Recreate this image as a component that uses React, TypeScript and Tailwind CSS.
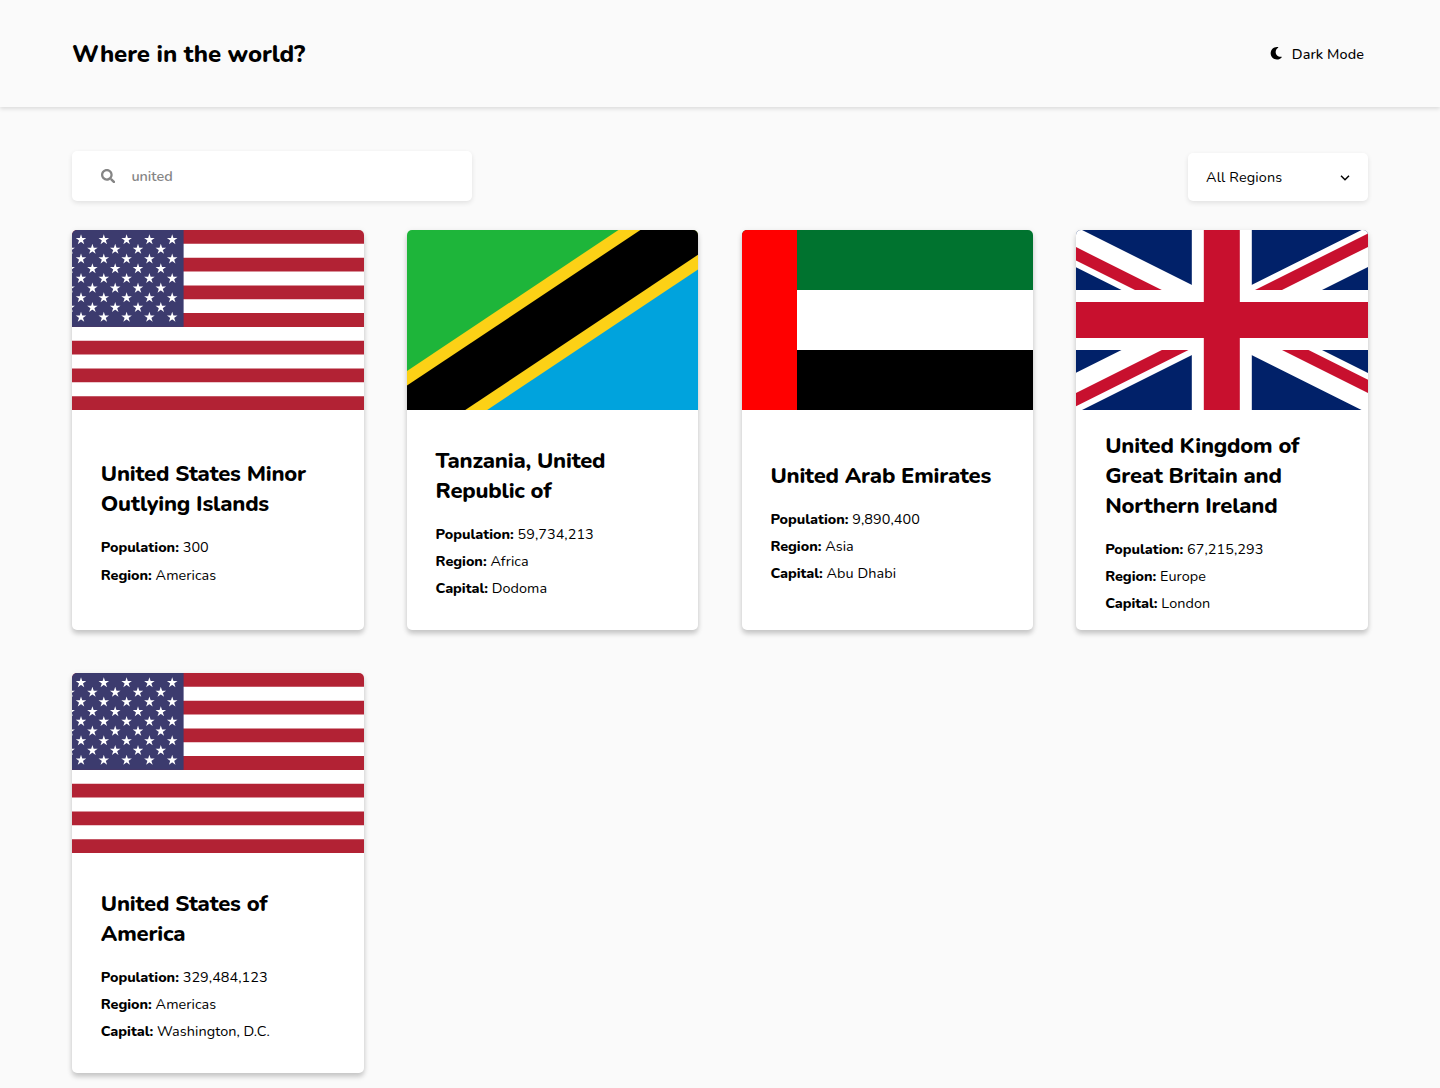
import React, { useState } from "react";
import { FaMoon, FaSearch } from "react-icons/fa";

const STAR = "M0,-120 70.5,97 -114.1,-37 114.1,-37 -70.5,97z";

function UsFlag() {
  const stars: [number, number][] = [];
  for (let row = 0; row < 9; row++) {
    const odd = row % 2 === 1;
    for (let i = 0; i < (odd ? 5 : 6); i++) {
      stars.push([(odd ? 494 : 247) + i * 494, 210 * (row + 1)]);
    }
  }
  return (
    <svg viewBox="0 0 7410 3900" preserveAspectRatio="xMidYMid slice" className="block h-full w-full">
      <rect width="7410" height="3900" fill="#b22234" />
      <path
        d="M0,450H7410m0,600H0m0,600H7410m0,600H0m0,600H7410m0,600H0"
        stroke="#fff"
        strokeWidth="300"
      />
      <rect width="2964" height="2100" fill="#3c3b6e" />
      {stars.map(([x, y]) => (
        <path key={`${x}-${y}`} d={STAR} transform={`translate(${x} ${y})`} fill="#fff" />
      ))}
    </svg>
  );
}

function TanzaniaFlag() {
  return (
    <svg viewBox="0 0 72 48" preserveAspectRatio="xMidYMid slice" className="block h-full w-full">
      <path d="M0,0H72L0,48z" fill="#1eb53a" />
      <path d="M72,0V48H0z" fill="#00a3dd" />
      <path d="M-12,56L84,-8" stroke="#fcd116" strokeWidth="19" />
      <path d="M-12,56L84,-8" stroke="#000" strokeWidth="13" />
    </svg>
  );
}

function UaeFlag() {
  return (
    <svg viewBox="0 0 12 6" preserveAspectRatio="xMidYMid slice" shapeRendering="crispEdges" className="block h-full w-full">
      <rect width="12" height="2" fill="#00732f" />
      <rect y="2" width="12" height="2" fill="#fff" />
      <rect y="4" width="12" height="2" fill="#000" />
      <rect width="2.97" height="6" fill="#f00" />
    </svg>
  );
}

function UkFlag() {
  return (
    <svg viewBox="0 0 60 30" preserveAspectRatio="xMidYMid slice" className="block h-full w-full">
      <clipPath id="uk-diagonals">
        <path d="M30,15h30v15zv15h-30zh-30v-15zv-15h30z" />
      </clipPath>
      <path d="M0,0v30h60v-30z" fill="#012169" />
      <path d="M0,0L60,30M60,0L0,30" stroke="#fff" strokeWidth="6" />
      <path d="M0,0L60,30M60,0L0,30" clipPath="url(#uk-diagonals)" stroke="#c8102e" strokeWidth="4" />
      <path d="M30,0v30M0,15h60" stroke="#fff" strokeWidth="10" />
      <path d="M30,0v30M0,15h60" stroke="#c8102e" strokeWidth="6" />
    </svg>
  );
}

type Country = {
  name: string;
  population: string;
  region: string;
  capital?: string;
  Flag: () => React.JSX.Element;
};

const countries: Country[] = [
  { name: "United States Minor Outlying Islands", population: "300", region: "Americas", Flag: UsFlag },
  { name: "Tanzania, United Republic of", population: "59,734,213", region: "Africa", capital: "Dodoma", Flag: TanzaniaFlag },
  { name: "United Arab Emirates", population: "9,890,400", region: "Asia", capital: "Abu Dhabi", Flag: UaeFlag },
  { name: "United Kingdom of Great Britain and Northern Ireland", population: "67,215,293", region: "Europe", capital: "London", Flag: UkFlag },
  { name: "United States of America", population: "329,484,123", region: "Americas", capital: "Washington, D.C.", Flag: UsFlag },
];

function Fact({ label, value }: { label: string; value: string }) {
  return (
    <li className="whitespace-nowrap">
      <span className="font-extrabold tracking-[-0.03px]">{label}:</span> {value}
    </li>
  );
}

function CountryCard({ name, population, region, capital, Flag }: Country) {
  return (
    <article className="flex h-[400px] flex-col overflow-hidden rounded-[5px] bg-white shadow-[0_4px_5px_rgba(0,0,0,0.17),0_1px_6px_rgba(0,0,0,0.08)]">
      <div className="h-[180px] shrink-0">
        <Flag />
      </div>
      <div className="flex flex-1 flex-col justify-center px-[28.8px] pt-px">
        <h2 className="text-[22px] leading-[30px] font-extrabold tracking-[-0.2px]">{name}</h2>
        <ul className="mt-[21px] flex flex-col gap-[13.2px] text-[14.4px] leading-[14px] tracking-[0.07px]">
          <Fact label="Population" value={population} />
          <Fact label="Region" value={region} />
          {capital && <Fact label="Capital" value={capital} />}
        </ul>
      </div>
    </article>
  );
}

export default function App() {
  const [query, setQuery] = useState("united");
  return (
    <div className="min-h-[1088px] bg-[#fafafa] font-['Nunito','Nunito_Sans',Lato,sans-serif] text-black">
      <header className="flex h-[107px] items-center justify-between px-[72px] shadow-[0_2px_4px_rgba(0,0,0,0.12)]">
        <h1 className="text-[24px] leading-[32px] font-extrabold tracking-[-0.08px]">Where in the world?</h1>
        <button className="mr-1 flex items-center gap-[9px] text-[14.4px] leading-5 font-medium">
          <FaMoon className="size-[12.5px]" />
          <span className="tracking-[0.1px]">Dark Mode</span>
        </button>
      </header>
      <main className="px-[72px] pt-11">
        <div className="flex items-end justify-between">
          <label className="flex h-[50px] w-[400px] items-center rounded-[5px] bg-white pl-[29px] shadow-[0_2px_5px_rgba(0,0,0,0.1)]">
            <FaSearch className="size-[14.4px] text-[#858585]" />
            <input
              value={query}
              onChange={(e) => setQuery(e.target.value)}
              className="ml-4 w-72 pt-0.5 text-[14.4px] font-semibold text-[#858585] outline-none"
            />
          </label>
          <button className="flex h-12 w-[180px] items-center justify-between rounded-[5px] bg-white px-[18px] text-[14.4px] shadow-[0_2px_5px_rgba(0,0,0,0.1)]">
            <span className="pt-0.5 tracking-[0.15px]">All Regions</span>
            <svg viewBox="0 0 10 6" className="mt-px h-1.5 w-2.5" fill="none" stroke="#000" strokeWidth="1.5">
              <path d="M1,0.8L5,4.8L9,0.8" />
            </svg>
          </button>
        </div>
        <section className="mt-[29px] grid grid-cols-4 gap-[43.2px]">
          {countries.map((country) => (
            <CountryCard key={country.name} {...country} />
          ))}
        </section>
      </main>
    </div>
  );
}
